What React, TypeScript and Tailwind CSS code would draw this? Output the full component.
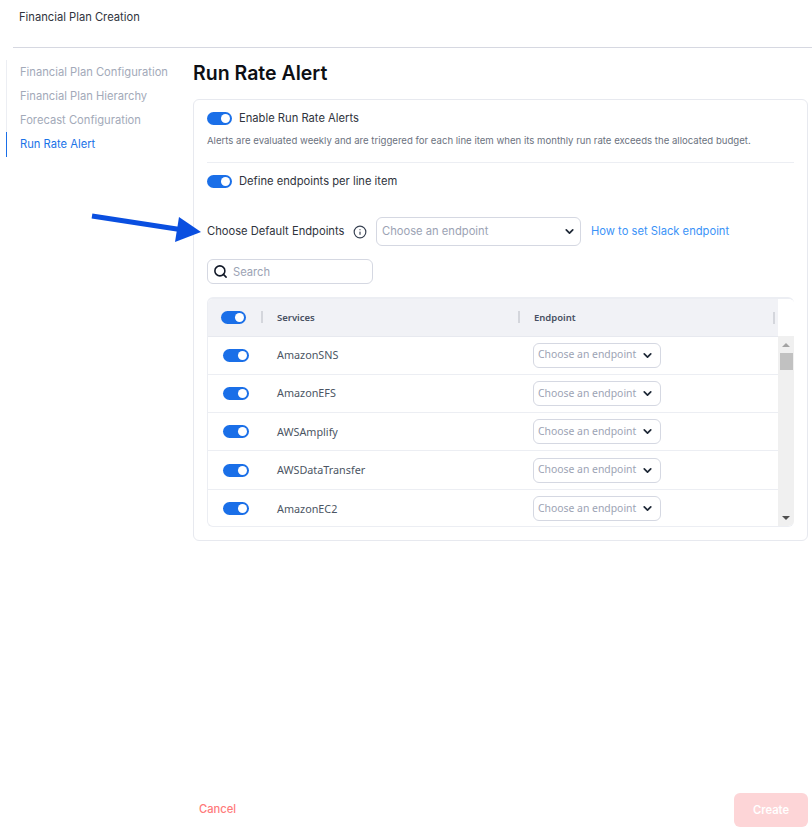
import { ChevronDown, Info, Search } from 'lucide-react';

const services = ['AmazonSNS', 'AmazonEFS', 'AWSAmplify', 'AWSDataTransfer', 'AmazonEC2'];

const navItems = ['Financial Plan Configuration', 'Financial Plan Hierarchy', 'Forecast Configuration'];

function Toggle({ className = '' }: { className?: string }) {
  return (
    <div className={`flex h-[13px] w-[25px] shrink-0 items-center justify-end rounded-full bg-[#1a6fe8] pr-[2px] ${className}`}>
      <div className="h-[9px] w-[9px] rounded-full bg-white" />
    </div>
  );
}

function RowSelect() {
  return (
    <div className="flex h-[25px] w-[128px] items-center rounded-md border border-[#d5d8e2] bg-white pl-[4px]">
      <span className="w-[99px] overflow-hidden whitespace-nowrap text-[10.4px] text-[#9ca3b4] [font-family:'Noto_Sans',sans-serif]">Choose an endpoint</span>
      <ChevronDown className="ml-[4px] h-[13px] w-[13px] text-[#1f2937]" strokeWidth={3.2} />
    </div>
  );
}

export default function App() {
  return (
    <div className="relative flex h-[837px] w-[812px] flex-col overflow-hidden bg-white text-[11.2px] text-[#374151] [font-family:Inter,sans-serif]">
      {/* Header */}
      <div className="ml-[13px] h-[48px] border-b border-[#d6d8e1] pl-[6px] pt-[9px]">
        <span className="text-[11.2px] leading-[14px] text-[#30343d]">Financial Plan Creation</span>
      </div>

      <div className="flex flex-1">
        {/* Side nav */}
        <div className="ml-[6px] mt-[12px] h-[97px] w-[187px] border-l border-[#eceef3]">
          {navItems.map((item) => (
            <div key={item} className="flex h-[24px] items-center pl-[13px] text-[#a3aab9]">
              {item}
            </div>
          ))}
          <div className="-ml-px flex h-[25px] items-center border-l border-[#1a6fe8] pl-[13px] text-[#1a73e8]">
            Run Rate Alert
          </div>
        </div>

        {/* Main */}
        <div className="flex w-[615px] flex-col pb-[10px]">
          <h1 className="mt-[13px] h-[38px] text-[19.5px] font-semibold leading-[24px] text-[#0d0f14]">Run Rate Alert</h1>

          <div className="h-[442px] rounded-md border border-[#e7e9ef] px-[13px] pt-[12px]">
            <div className="flex h-[13px] items-center gap-[7px]">
              <Toggle />
              <span className="text-[#30343d]">Enable Run Rate Alerts</span>
            </div>
            <p className="mt-[9px] h-[28px] whitespace-nowrap text-[9.6px] leading-[14px] text-[#6b7280]">
              Alerts are evaluated weekly and are triggered for each line item when its monthly run rate exceeds the allocated budget.
            </p>
            <div className="h-px bg-[#eceef3]" />

            <div className="mt-[12px] flex h-[13px] items-center gap-[7px]">
              <Toggle />
              <span className="text-[#30343d]">Define endpoints per line item</span>
            </div>

            <div className="mt-[29px] flex h-[29px] items-center">
              <span className="w-[146px] text-[#30343d]">Choose Default Endpoints</span>
              <Info className="h-[14px] w-[14px] text-[#374151]" strokeWidth={2} />
              <div className="ml-[9px] flex h-[29px] w-[205px] items-center justify-between rounded-md border border-[#d5d8e2] pl-[5px] pr-[4px]">
                <span className="text-[#9ca3b4]">Choose an endpoint</span>
                <ChevronDown className="h-[13px] w-[13px] text-[#1f2937]" strokeWidth={3.2} />
              </div>
              <a className="ml-[10px] text-[#3b93f7]">How to set Slack endpoint</a>
            </div>

            <div className="mt-[13px] flex h-[25px] w-[166px] items-center gap-[5px] rounded-md border border-[#d5d8e2] pl-[5px]">
              <Search className="h-[15px] w-[15px] text-[#111827]" strokeWidth={2.5} />
              <span className="pt-px text-[#9ca3b4]">Search</span>
            </div>

            {/* Table */}
            <div className="mt-[13px] flex h-[230px] w-[587px] overflow-hidden rounded-md border-b border-l border-t-2 border-[#eceef3]">
              <div className="w-[570px] shrink-0">
                <div className="grid h-[37.5px] grid-cols-[53px_257px_257px] items-center border-b border-[#e7e9ef] bg-[#f1f2f6] [font-family:'Noto_Sans',sans-serif]">
                  <div className="pl-[13px]">
                    <Toggle />
                  </div>
                  <div className="flex h-[12px] items-center border-l-2 border-[#d4d6dc] pl-[14px] pt-px text-[9.5px] font-semibold text-[#475062]">
                    Services
                  </div>
                  <div className="flex h-[12px] items-center justify-between border-l-2 border-[#d4d6dc] pl-[14px] pt-px text-[9.5px] font-semibold text-[#475062]">
                    Endpoint
                    <div className="h-[12px] w-[2px] bg-[#d4d6dc]" />
                  </div>
                </div>
                {services.map((name) => (
                  <div key={name} className="grid h-[38.3px] grid-cols-[54px_257px_259px] items-center border-b border-[#eceef3] last:border-b-0">
                    <div className="pl-[15px]">
                      <Toggle className="w-[26px]" />
                    </div>
                    <div className="pl-[15px] text-[10.8px] text-[#4b5563] [font-family:'Noto_Sans',sans-serif]">{name}</div>
                    <div className="pl-[14px]">
                      <RowSelect />
                    </div>
                  </div>
                ))}
              </div>

              {/* Scrollbar */}
              <div className="flex w-[16px] flex-col">
                <div className="h-[37px] bg-white" />
                <div className="flex flex-1 flex-col items-center bg-[#f0f0f0] pt-[7px]">
                  <div className="h-0 w-0 border-x-[4px] border-b-[4px] border-x-transparent border-b-[#a3a3a3]" />
                  <div className="mt-[6px] h-[17px] w-[13px] bg-[#c1c1c1]" />
                  <div className="mb-[6px] mt-auto h-0 w-0 border-x-[4px] border-t-[4px] border-x-transparent border-t-[#505050]" />
                </div>
              </div>
            </div>
          </div>

          {/* Footer */}
          <div className="mt-auto flex items-center justify-between pl-[6px]">
            <span className="-mt-[2px] font-medium text-[#ff7a7a]">Cancel</span>
            <div className="flex h-[34px] w-[74px] items-center justify-center rounded-md bg-[#fdd5d7] font-semibold text-white">
              Create
            </div>
          </div>
        </div>
      </div>

      {/* Annotation arrow */}
      <svg className="absolute left-[88px] top-[208px]" width="120" height="36" viewBox="0 0 120 36">
        <path d="M4 8 L92 21.5" stroke="#0a4fe0" strokeWidth="5" fill="none" />
        <path d="M91 9 L113 24 L87 34 Z" fill="#0a4fe0" />
      </svg>
    </div>
  );
}
